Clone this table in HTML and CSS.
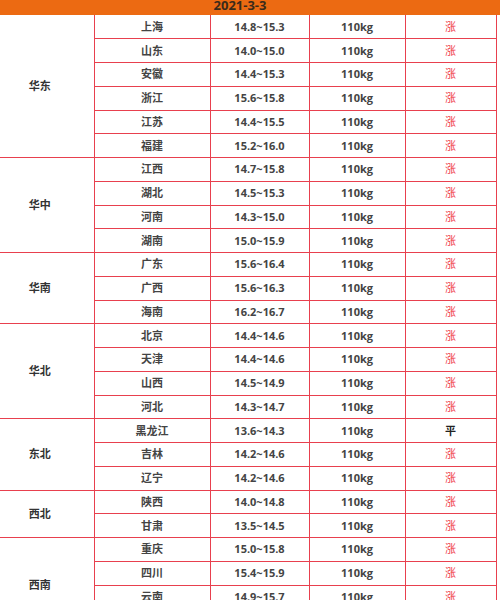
FILE: index.html
```html
<!DOCTYPE html>
<html lang="zh">
<head>
<meta charset="utf-8">
<link rel="stylesheet" href="styles.css">
</head>
<body>
<div class="page">
<div class="title">2021-3-3</div>
<table class="price">
<colgroup>
<col class="c-region"><col class="c-city"><col class="c-range"><col class="c-weight"><col class="c-trend">
</colgroup>
<tbody>
<tr class="first"><td class="region" rowspan="6">华东</td><td>上海</td><td>14.8~15.3</td><td>110kg</td><td class="up">涨</td></tr>
<tr><td>山东</td><td>14.0~15.0</td><td>110kg</td><td class="up">涨</td></tr>
<tr><td>安徽</td><td>14.4~15.3</td><td>110kg</td><td class="up">涨</td></tr>
<tr><td>浙江</td><td>15.6~15.8</td><td>110kg</td><td class="up">涨</td></tr>
<tr><td>江苏</td><td>14.4~15.5</td><td>110kg</td><td class="up">涨</td></tr>
<tr><td>福建</td><td>15.2~16.0</td><td>110kg</td><td class="up">涨</td></tr>
<tr class="group"><td class="region" rowspan="4">华中</td><td>江西</td><td>14.7~15.8</td><td>110kg</td><td class="up">涨</td></tr>
<tr><td>湖北</td><td>14.5~15.3</td><td>110kg</td><td class="up">涨</td></tr>
<tr><td>河南</td><td>14.3~15.0</td><td>110kg</td><td class="up">涨</td></tr>
<tr><td>湖南</td><td>15.0~15.9</td><td>110kg</td><td class="up">涨</td></tr>
<tr class="group"><td class="region" rowspan="3">华南</td><td>广东</td><td>15.6~16.4</td><td>110kg</td><td class="up">涨</td></tr>
<tr><td>广西</td><td>15.6~16.3</td><td>110kg</td><td class="up">涨</td></tr>
<tr><td>海南</td><td>16.2~16.7</td><td>110kg</td><td class="up">涨</td></tr>
<tr class="group"><td class="region" rowspan="4">华北</td><td>北京</td><td>14.4~14.6</td><td>110kg</td><td class="up">涨</td></tr>
<tr><td>天津</td><td>14.4~14.6</td><td>110kg</td><td class="up">涨</td></tr>
<tr><td>山西</td><td>14.5~14.9</td><td>110kg</td><td class="up">涨</td></tr>
<tr><td>河北</td><td>14.3~14.7</td><td>110kg</td><td class="up">涨</td></tr>
<tr class="group"><td class="region" rowspan="3">东北</td><td>黑龙江</td><td>13.6~14.3</td><td>110kg</td><td class="flat">平</td></tr>
<tr><td>吉林</td><td>14.2~14.6</td><td>110kg</td><td class="up">涨</td></tr>
<tr><td>辽宁</td><td>14.2~14.6</td><td>110kg</td><td class="up">涨</td></tr>
<tr class="group"><td class="region" rowspan="2">西北</td><td>陕西</td><td>14.0~14.8</td><td>110kg</td><td class="up">涨</td></tr>
<tr><td>甘肃</td><td>13.5~14.5</td><td>110kg</td><td class="up">涨</td></tr>
<tr class="group"><td class="region" rowspan="4">西南</td><td>重庆</td><td>15.0~15.8</td><td>110kg</td><td class="up">涨</td></tr>
<tr><td>四川</td><td>15.4~15.9</td><td>110kg</td><td class="up">涨</td></tr>
<tr><td>云南</td><td>14.9~15.7</td><td>110kg</td><td class="up">涨</td></tr>
<tr><td>贵州</td><td>14.8~15.6</td><td>110kg</td><td class="up">涨</td></tr>
</tbody>
</table>
</div>
</body>
</html>
```
FILE: styles.css
```css
html, body {
  margin: 0;
  padding: 0;
  background: #ffffff;
}
body {
  font-family: "Open Sans", "Noto Sans CJK SC", sans-serif;
  width: 500px;
  height: 600px;
  overflow: hidden;
}
.page {
  width: 500px;
}
.title {
  height: 15px;
  background: #ec6a12;
  color: #3a2a1a;
  font-size: 13px;
  font-weight: 700;
  line-height: 11px;
  text-align: center;
  padding-right: 20px;
  overflow: hidden;
}
.price {
  border-collapse: collapse;
  table-layout: fixed;
  width: 496px;
  font-size: 11px;
  font-weight: 700;
  color: #444444;
}
.c-region { width: 94px; }
.c-city { width: 116px; }
.c-range { width: 99px; }
.c-weight { width: 96px; }
.c-trend { width: 91px; }
.price tr {
  height: 23.75px;
}
.price td {
  border: 1px solid #e8404e;
  padding: 0;
  text-align: center;
  vertical-align: middle;
  line-height: 14px;
}
.price tr.first td {
  border-top: none;
}
.price td.region {
  border-left: none;
  padding-right: 14px;
  font-size: 11px;
  color: #333333;
}
.price tr.group td {
  border-top: 1px solid #e03444;
}
.price td.up {
  color: #ef3a48;
  font-weight: 400;
}
.price td.flat {
  color: #222222;
  font-weight: 700;
}
```
